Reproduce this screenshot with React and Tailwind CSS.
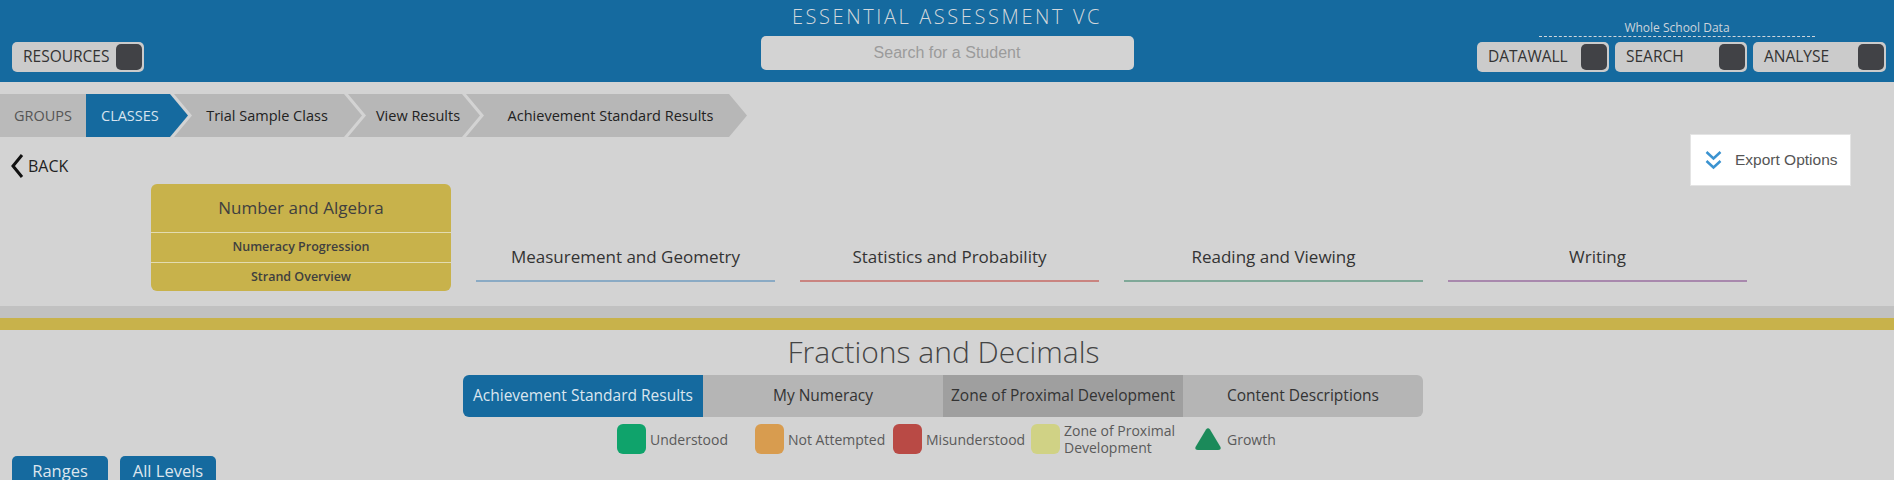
import React from "react";

const CRUMBS = [
  { label: "Trial Sample Class", w: "w-[188px]", pad: "pl-[16px] pr-[18px]" },
  { label: "View Results", w: "w-[132px]", pad: "pl-[26px] pr-[18px]" },
  { label: "Achievement Standard Results", w: "w-[281px]", pad: "pl-[26px] pr-[18px]" },
];

const STRANDS = [
  { label: "Measurement and Geometry", line: "bg-[#8aaac4]" },
  { label: "Statistics and Probability", line: "bg-[#c98480]" },
  { label: "Reading and Viewing", line: "bg-[#7fa898]" },
  { label: "Writing", line: "bg-[#a888ad]" },
];

const TABS = [
  { label: "Achievement Standard Results", cls: "bg-[#156a9f] text-[#dbe6ef] rounded-l-[6px]" },
  { label: "My Numeracy", cls: "bg-[#b5b5b5] text-[#333]" },
  { label: "Zone of Proximal Development", cls: "bg-[#9f9f9f] text-[#333]" },
  { label: "Content Descriptions", cls: "bg-[#b5b5b5] text-[#333] rounded-r-[6px]" },
];

function HeaderButton({ label, className }) {
  return (
    <div className={"flex h-[30px] items-center justify-between rounded-[5px] bg-[#cbcbcb] pl-[11px] pr-[2px] " + className}>
      <span className="text-[15.5px] text-[#333]">{label}</span>
      <span className="h-[26px] w-[26px] rounded-[5px] bg-[#414246]" />
    </div>
  );
}

function LegendSwatch({ color, children }) {
  return (
    <div className="flex w-[138px] items-center gap-[4px]">
      <span className={"h-[30px] w-[29px] shrink-0 rounded-[6px] " + color} />
      <span className="whitespace-nowrap text-[14px] leading-[17px] text-[#5a5a5a]">{children}</span>
    </div>
  );
}

export default function App() {
  return (
    <div className="min-h-[480px] bg-[#d3d3d3] font-['Open_Sans',sans-serif]">
      {/* header */}
      <div className="grid h-[82px] grid-cols-[1fr_auto_1fr] items-end bg-[#156a9f] pb-[10px]">
        <div className="pl-[12px]">
          <HeaderButton label="RESOURCES" className="w-[132px]" />
        </div>
        <div className="flex flex-col items-center self-start">
          <div className="pt-[5px] text-[20px] font-light leading-[24px] tracking-[2.6px] text-[#d3d8dc]">
            ESSENTIAL ASSESSMENT VC
          </div>
          <div className="mt-[7px] flex h-[34px] w-[373px] items-center justify-center rounded-[5px] bg-[#d3d3d3] font-['Liberation_Sans',Arial,sans-serif] text-[16px] text-[#9b9b9b]">
            Search for a Student
          </div>
        </div>
        <div className="flex flex-col items-end pr-[8px]">
          <div className="mr-[71px] w-[276px] border-b border-dashed border-[#cfd6dc] text-center text-[12px] leading-[16px] text-[#cdd5dc]">
            Whole School Data
          </div>
          <div className="mt-[5px] flex gap-[6px]">
            <HeaderButton label="DATAWALL" className="w-[132px]" />
            <HeaderButton label="SEARCH" className="w-[132px]" />
            <HeaderButton label="ANALYSE" className="w-[133px]" />
          </div>
        </div>
      </div>

      {/* breadcrumb */}
      <div className="mt-[12px] flex h-[43px] text-[14.5px]">
        <div className="flex w-[86px] items-center bg-[#bababa] pl-[14px] text-[#555]">GROUPS</div>
        <div className="flex w-[102px] items-center bg-[#156a9f] pl-[15px] text-[#d6e3ee] [clip-path:polygon(0_0,calc(100%_-_18px)_0,100%_50%,calc(100%_-_18px)_100%,0_100%)]">
          CLASSES
        </div>
        {CRUMBS.map((c) => (
          <div
            key={c.label}
            className={
              "-ml-[14px] flex items-center justify-center whitespace-nowrap bg-[#b7b7b7] text-[#222] [clip-path:polygon(0_0,calc(100%_-_18px)_0,100%_50%,calc(100%_-_18px)_100%,0_100%,18px_50%)] " +
              c.w +
              " " +
              c.pad
            }
          >
            {c.label}
          </div>
        ))}
      </div>

      {/* back + export */}
      <div className="flex items-start justify-between pr-[43px]">
        <div className="mt-[16px] flex items-center pl-[10px]">
          <svg width="14" height="26" viewBox="0 0 14 26">
            <polyline points="12,2 3,13 12,24" fill="none" stroke="#111" strokeWidth="3" />
          </svg>
          <span className="ml-[4px] text-[16px] text-[#222]">BACK</span>
        </div>
        <div className="mt-[-3px] flex h-[52px] w-[161px] items-center border border-[#e4e4e4] bg-white pl-[13px]">
          <svg width="19" height="20" viewBox="0 0 19 20">
            <polyline points="2.5,2 9.5,8.5 16.5,2" fill="none" stroke="#3b93d0" strokeWidth="2.5" />
            <polyline points="2.5,11 9.5,17.5 16.5,11" fill="none" stroke="#3b93d0" strokeWidth="2.5" />
          </svg>
          <span className="ml-[12px] font-['Liberation_Sans',Arial,sans-serif] text-[15.5px] text-[#555]">Export Options</span>
        </div>
      </div>

      {/* strands */}
      <div className="mt-[-2px] flex justify-center gap-[25px] pl-[4px]">
        <div className="flex w-[300px] flex-col overflow-hidden rounded-[6px] bg-[#c8b24b] text-center text-[#3f3f3f]">
          <div className="flex h-[48px] items-center justify-center text-[17px]">Number and Algebra</div>
          <div className="flex h-[30px] items-center justify-center border-t border-[#e3dcb0] text-[12.5px] font-semibold">
            Numeracy Progression
          </div>
          <div className="flex h-[29px] items-center justify-center border-t border-[#e3dcb0] text-[12.5px] font-semibold">
            Strand Overview
          </div>
        </div>
        {STRANDS.map((s) => (
          <div key={s.label} className="flex w-[299px] flex-col justify-end pb-[9px]">
            <div className="text-center text-[17px] leading-[24px] text-[#333]">{s.label}</div>
            <div className={"mt-[11px] h-[2px] " + s.line} />
          </div>
        ))}
      </div>

      {/* bands */}
      <div className="mt-[15px] h-[12px] bg-[#c1c1c1]" />
      <div className="h-[12px] bg-[#c8b24b]" />

      {/* content */}
      <div className="mt-[4px] pr-[7px] text-center text-[30px] font-light leading-[36px] text-[#444]">Fractions and Decimals</div>

      <div className="mt-[5px] flex justify-center pr-[8px]">
        {TABS.map((t) => (
          <div key={t.label} className={"flex h-[42px] w-[240px] items-center justify-center text-[15.5px] " + t.cls}>
            {t.label}
          </div>
        ))}
      </div>

      <div className="mt-[7px] flex h-[30px] justify-center pl-[30px]">
        <LegendSwatch color="bg-[#0fa36b]">Understood</LegendSwatch>
        <LegendSwatch color="bg-[#d89c4f]">Not Attempted</LegendSwatch>
        <LegendSwatch color="bg-[#b94a45]">Misunderstood</LegendSwatch>
        <LegendSwatch color="bg-[#d0d285]">
          Zone of Proximal
          <br />
          Development
        </LegendSwatch>
        <div className="flex w-[138px] items-center pl-[25px]">
          <svg width="28" height="24" viewBox="0 0 28 24">
            <path d="M12 2.5 Q14 0 16 2.5 L26.5 20 Q27.5 23 24 23 L4 23 Q0.5 23 1.5 20 Z" fill="#1b8a5a" />
          </svg>
          <span className="ml-[5px] text-[14px] text-[#5a5a5a]">Growth</span>
        </div>
      </div>

      <div className="mt-[2px] flex gap-[12px] pl-[12px]">
        <div className="flex h-[30px] w-[96px] items-center justify-center rounded-t-[5px] bg-[#156a9f] text-[16.5px] text-[#dde6ee]">
          Ranges
        </div>
        <div className="flex h-[30px] w-[96px] items-center justify-center rounded-t-[5px] bg-[#156a9f] text-[16.5px] text-[#dde6ee]">
          All Levels
        </div>
      </div>
    </div>
  );
}
